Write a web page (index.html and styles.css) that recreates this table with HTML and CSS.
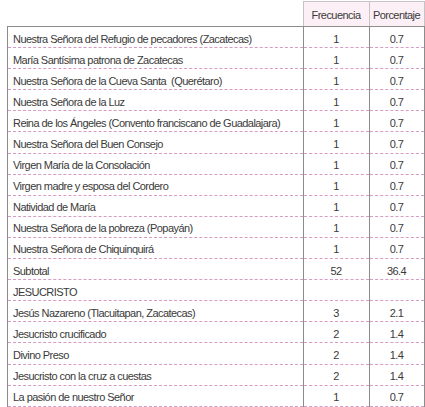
FILE: index.html
```html
<!DOCTYPE html>
<html lang="es">
<head>
<meta charset="utf-8">
<link rel="stylesheet" href="styles.css">
</head>
<body>
<table class="freq">
  <thead>
    <tr>
      <th class="blank"></th>
      <th class="hcol c2">Frecuencia</th>
      <th class="hcol c3">Porcentaje</th>
    </tr>
  </thead>
  <tbody>
    <tr><td>Nuestra Señora del Refugio de pecadores (Zacatecas)</td><td class="num">1</td><td class="num">0.7</td></tr>
    <tr><td>María Santísima patrona de Zacatecas</td><td class="num">1</td><td class="num">0.7</td></tr>
    <tr><td>Nuestra Señora de la Cueva Santa&nbsp; (Querétaro)</td><td class="num">1</td><td class="num">0.7</td></tr>
    <tr><td>Nuestra Señora de la Luz</td><td class="num">1</td><td class="num">0.7</td></tr>
    <tr><td>Reina de los Ángeles (Convento franciscano de Guadalajara)</td><td class="num">1</td><td class="num">0.7</td></tr>
    <tr><td>Nuestra Señora del Buen Consejo</td><td class="num">1</td><td class="num">0.7</td></tr>
    <tr><td>Virgen María de la Consolación</td><td class="num">1</td><td class="num">0.7</td></tr>
    <tr><td>Virgen madre y esposa del Cordero</td><td class="num">1</td><td class="num">0.7</td></tr>
    <tr><td>Natividad de María</td><td class="num">1</td><td class="num">0.7</td></tr>
    <tr><td>Nuestra Señora de la pobreza (Popayán)</td><td class="num">1</td><td class="num">0.7</td></tr>
    <tr><td>Nuestra Señora de Chiquinquirá</td><td class="num">1</td><td class="num">0.7</td></tr>
    <tr><td>Subtotal</td><td class="num">52</td><td class="num">36.4</td></tr>
    <tr><td>JESUCRISTO</td><td class="num"></td><td class="num"></td></tr>
    <tr><td>Jesús Nazareno (Tlacuitapan, Zacatecas)</td><td class="num">3</td><td class="num">2.1</td></tr>
    <tr><td>Jesucristo crucificado</td><td class="num">2</td><td class="num">1.4</td></tr>
    <tr><td>Divino Preso</td><td class="num">2</td><td class="num">1.4</td></tr>
    <tr><td>Jesucristo con la cruz a cuestas</td><td class="num">2</td><td class="num">1.4</td></tr>
    <tr><td>La pasión de nuestro Señor</td><td class="num">1</td><td class="num">0.7</td></tr>
  </tbody>
</table>
</body>
</html>
```

FILE: styles.css
```css
html, body {
  margin: 0;
  padding: 0;
  background: #ffffff;
}
body {
  padding: 1px 3px 0 7px;
  font-family: "Liberation Sans", Arial, sans-serif;
  font-size: 11px;
  letter-spacing: -0.55px;
  color: #3a3a3a;
}
.freq {
  border-collapse: collapse;
  width: 415px;
  table-layout: fixed;
}
.freq th, .freq td {
  padding: 0 0 0 5px;
  font-weight: normal;
  text-align: left;
  white-space: nowrap;
  overflow: hidden;
}
.freq th.blank {
  width: 290px;
  border: none;
  border-bottom: 1px solid #8c8c8c;
}
.freq th.hcol {
  height: 22px;
  background: #fcf0f6;
  border: 1px solid #c4c4c4;
  border-bottom: 1px solid #8c8c8c;
  text-align: center;
  padding: 2px 0 0 0;
  vertical-align: middle;
}
.freq th.c2 {
  width: 65px;
}
.freq th.c3 {
  width: 54px;
}
.freq td {
  height: 17.1px;
  padding-top: 3px;
  border-left: 1px solid #8c8c8c;
  border-right: 1px solid #8c8c8c;
  border-bottom: 1px dashed #d69cc3;
  vertical-align: middle;
}
.freq td.num {
  text-align: center;
  padding-left: 0;
}
```
